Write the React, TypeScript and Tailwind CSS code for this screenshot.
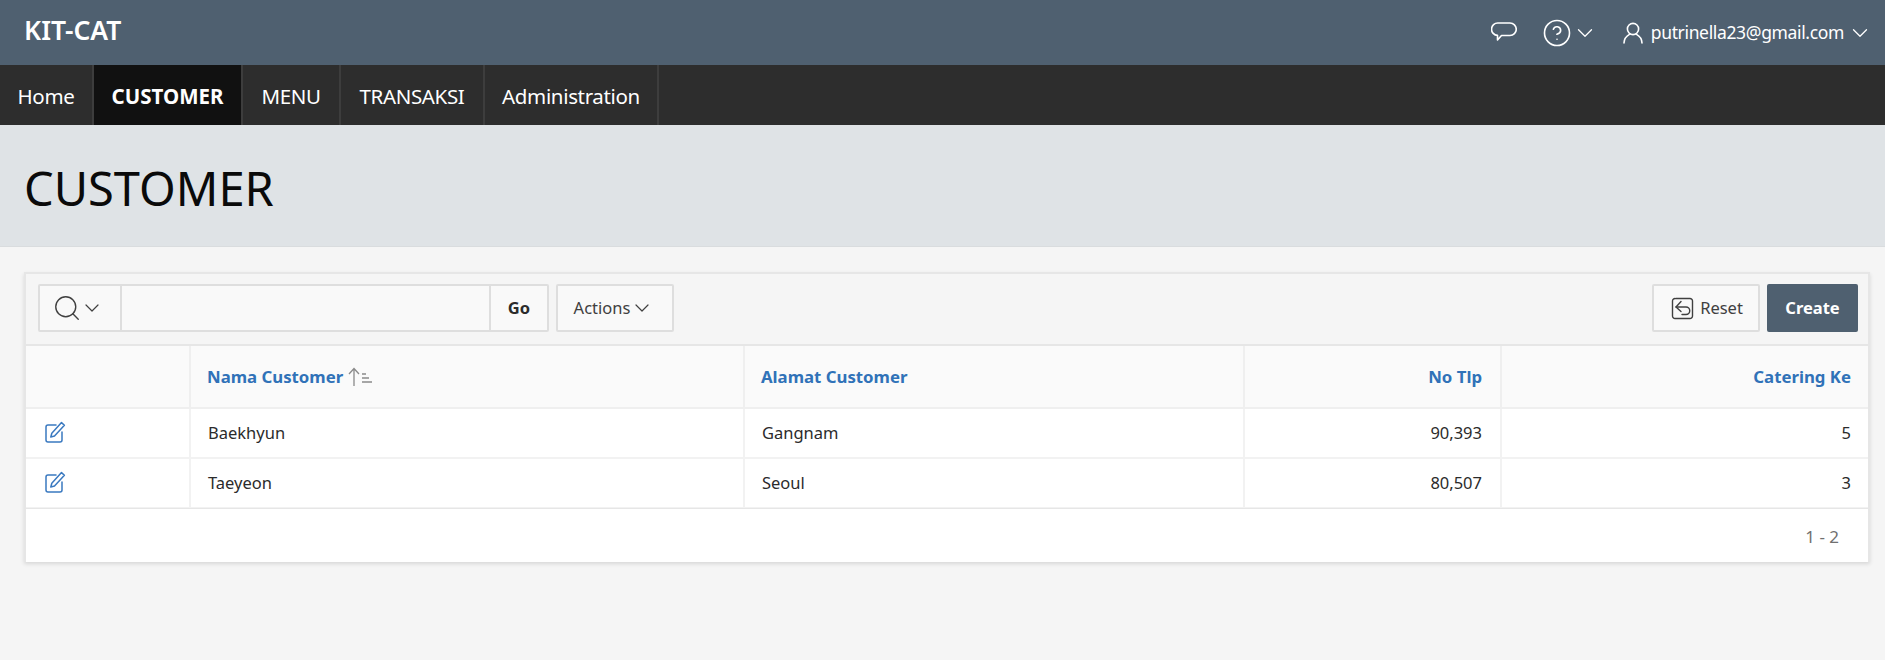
import React from "react";
import { ChevronDown, Search, CircleHelp } from "lucide-react";

const navItems = [
  { label: "Home", width: "w-[94px]" },
  { label: "CUSTOMER", width: "w-[149px]", active: true },
  { label: "MENU", width: "w-[98px]" },
  { label: "TRANSAKSI", width: "w-[144px]" },
  { label: "Administration", width: "w-[174px]" },
];

const rows = [
  { name: "Baekhyun", address: "Gangnam", phone: "90,393", catering: "5" },
  { name: "Taeyeon", address: "Seoul", phone: "80,507", catering: "3" },
];

const gridCols = "grid grid-cols-[165px_554px_500px_257px_1fr]";

function ChatIcon() {
  return (
    <svg width="26" height="22" viewBox="0 0 26 22" fill="none" stroke="currentColor" strokeWidth="1.6" strokeLinejoin="round">
      <path d="M7 2h12a5.5 5.5 0 0 1 0 12.5H10.5L6.5 19v-4.6A6.2 6.2 0 0 1 7 2z" />
    </svg>
  );
}

function UserIcon() {
  return (
    <svg width="20" height="22" viewBox="0 0 20 22" fill="none" stroke="currentColor" strokeWidth="1.6" strokeLinecap="round">
      <circle cx="10" cy="7" r="5.6" />
      <path d="M1 21c0-4.5 2.4-7 5.8-8.9M19 21c0-4.5-2.4-7-5.8-8.9" />
    </svg>
  );
}

function EditIcon() {
  return (
    <svg width="22" height="22" viewBox="0 0 22 22" fill="none" stroke="#3a79c0" strokeWidth="1.5" strokeLinejoin="round" strokeLinecap="round">
      <path d="M12 4H4a2 2 0 0 0-2 2v13a2 2 0 0 0 2 2h12a2 2 0 0 0 2-2v-8" />
      <path d="M17.5 1.6 20.4 4.2 10.5 15 6.8 16 7.8 12.2z" />
    </svg>
  );
}

function ResetIcon() {
  return (
    <svg width="23" height="23" viewBox="0 0 23 23" fill="none" stroke="#404040" strokeWidth="1.4" strokeLinejoin="round" strokeLinecap="round">
      <path d="M5 1.5h14a2.5 2.5 0 0 1 2.5 2.5v15a2.5 2.5 0 0 1-2.5 2.5H4A2.5 2.5 0 0 1 1.5 19V4A2.5 2.5 0 0 1 4 1.5" />
      <path d="M10 4.5 5 10l5 4.5" />
      <path d="M5 10h10a3.6 3.6 0 0 1 0 7.5h-4" />
    </svg>
  );
}

function SortIcon() {
  return (
    <svg width="26" height="20" viewBox="0 0 26 20" fill="none" stroke="#8a8a8a" strokeWidth="1.3">
      <path d="M6 19V1.5M1 7 6 1.5l5 5.5" />
      <path d="M14 7h4M14 11h7M14 15h10" />
    </svg>
  );
}

export default function App() {
  return (
    <div className="min-h-[660px] bg-[#f5f5f5] font-['Noto_Sans','Open_Sans',sans-serif] text-[#2b2b2b]">
      <header className="h-[65px] bg-[#4f6070] flex items-center justify-between pl-6 pr-[12px] text-white">
        <div className="text-[26.5px] font-semibold pb-[4px]">KIT-CAT</div>
        <div className="flex items-center">
          <span className="flex -translate-y-[1px]"><ChatIcon /></span>
          <CircleHelp size={30} strokeWidth={1.3} className="ml-[25px]" />
          <ChevronDown size={26} strokeWidth={1.2} />
          <span className="ml-[25px] flex"><UserIcon /></span>
          <span className="ml-[8px] text-[17.5px] tracking-[-0.35px]">putrinella23@gmail.com</span>
          <ChevronDown size={26} strokeWidth={1.2} className="ml-[3px]" />
        </div>
      </header>

      <nav className="h-[60px] bg-[#2d2d2d] flex text-white">
        {navItems.map((item) => (
          <a
            key={item.label}
            className={`${item.width} flex items-center justify-center pt-[2px] border-r-2 border-[#3d3d3d] text-[20.5px] ${item.active ? "bg-[#111111] font-bold" : "tracking-[-0.35px]"}`}
          >
            {item.label}
          </a>
        ))}
      </nav>

      <div className="h-[122px] bg-[#dfe3e6] border-b border-[#d9dcde] flex items-center pl-6 pt-[6px] text-[47px] text-[#0a0a0a]">
        CUSTOMER
      </div>

      <main className="pt-[25px] pl-[24px] pr-[15px]">
        <section className="border-2 border-[#e6e6e6] border-b-0 shadow-[0_2px_4px_rgba(0,0,0,0.12)] bg-white">
          <div className="h-[72px] bg-[#f5f5f5] border-b-2 border-[#e6e6e6] flex items-center justify-between pl-[12px] pr-[10px] pb-[2px] text-[16.5px]">
            <div className="flex gap-[7px]">
              <div className="flex h-[48px] w-[511px] rounded-[2px] border-2 border-[#dedede] bg-[#f9f9f9]">
                <div className="w-[82px] flex items-center pl-[12px] border-r-2 border-[#dedede] text-[#404040]">
                  <Search size={30} strokeWidth={1.1} />
                  <ChevronDown size={24} strokeWidth={1.2} className="-ml-[2px]" />
                </div>
                <div className="flex-1" />
                <div className="w-[58px] flex items-center justify-center border-l-2 border-[#dedede] font-bold">Go</div>
              </div>
              <button className="h-[48px] w-[118px] rounded-[2px] border-2 border-[#dedede] bg-[#f9f9f9] flex items-center justify-center pr-[2px] text-[#404040]">
                Actions
                <ChevronDown size={24} strokeWidth={1.2} />
              </button>
            </div>
            <div className="flex gap-[7px]">
              <button className="h-[48px] w-[108px] rounded-[2px] border-2 border-[#dedede] bg-[#f9f9f9] flex items-center justify-center gap-[6px] pl-[2px] text-[#404040]">
                <ResetIcon />
                Reset
              </button>
              <button className="h-[48px] w-[91px] rounded-[2px] bg-[#4f6070] flex items-center justify-center text-white font-bold">
                Create
              </button>
            </div>
          </div>

          <div className={`${gridCols} h-[63px] bg-[#fafafa] border-b-2 border-[#efefef] text-[16.8px] font-bold text-[#3072b8]`}>
            <div className="border-r-2 border-[#efefef]" />
            <div className="border-r-2 border-[#efefef] flex items-center pl-4">
              Nama Customer
              <span className="ml-[5px] flex"><SortIcon /></span>
            </div>
            <div className="border-r-2 border-[#efefef] flex items-center pl-4">Alamat Customer</div>
            <div className="border-r-2 border-[#efefef] flex items-center justify-end pr-[18px]">No Tlp</div>
            <div className="flex items-center justify-end pr-[17px]">Catering Ke</div>
          </div>

          {rows.map((row) => (
            <div key={row.name} className={`${gridCols} h-[50px] border-b-2 border-[#f2f2f2] text-[16.5px]`}>
              <div className="border-r-2 border-[#f2f2f2] flex items-center pl-[18px] pb-[2px]"><EditIcon /></div>
              <div className="border-r-2 border-[#f2f2f2] flex items-center pl-[17px] pt-[1px]">{row.name}</div>
              <div className="border-r-2 border-[#f2f2f2] flex items-center pl-[17px] pt-[1px]">{row.address}</div>
              <div className="border-r-2 border-[#f2f2f2] flex items-center justify-end pr-[18px] pt-[1px]">{row.phone}</div>
              <div className="flex items-center justify-end pr-[17px] pt-[1px]">{row.catering}</div>
            </div>
          ))}

          <div className="h-[54px] border-t border-[#e6e6e6] -mt-[1px] flex items-center justify-end pr-[29px] pt-[3px] text-[17px] text-[#707070]">
            1 - 2
          </div>
        </section>
      </main>
    </div>
  );
}
